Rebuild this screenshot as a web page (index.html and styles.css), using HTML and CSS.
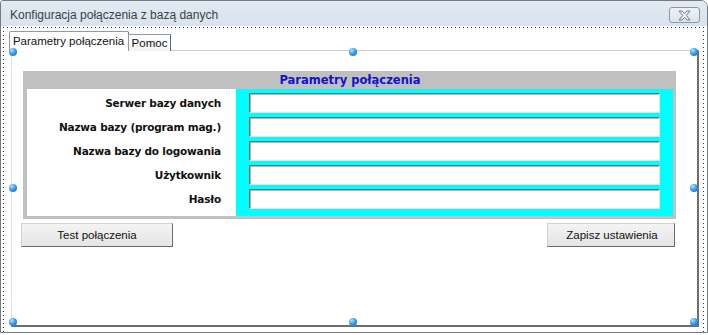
FILE: index.html
```html
<!DOCTYPE html>
<html lang="pl">
<head>
<meta charset="utf-8">
<title>Konfiguracja połączenia z bazą danych</title>
<link rel="stylesheet" href="styles.css">
</head>
<body>
<div class="window">
  <div class="titlebar">
    <span class="title">Konfiguracja połączenia z bazą danych</span>
    <div class="close">
      <svg width="15" height="11" viewBox="0 0 15 11">
        <path d="M2 1 L5 1 L7.5 3.6 L10 1 L13 1 L9.3 5.5 L13 10 L10 10 L7.5 7.4 L5 10 L2 10 L5.7 5.5 Z" fill="#f4f6f8" stroke="#6f7986" stroke-width="1"/>
      </svg>
    </div>
  </div>
  <div class="designer">
    <div class="tabs">
      <div class="tab active">Parametry połączenia</div>
      <div class="tab">Pomoc</div>
    </div>
    <div class="page">
      <span class="handle h-tl"></span>
      <span class="handle h-tc"></span>
      <span class="handle h-tr"></span>
      <span class="handle h-ml"></span>
      <span class="handle h-mr"></span>
      <span class="handle h-bl"></span>
      <span class="handle h-bc"></span>
      <span class="handle h-br"></span>
      <div class="panel">
        <div class="panel-head">Parametry połączenia</div>
        <div class="panel-body">
          <div class="labels">
            <div class="label">Serwer bazy danych</div>
            <div class="label">Nazwa bazy (program mag.)</div>
            <div class="label">Nazwa bazy do logowania</div>
            <div class="label">Użytkownik</div>
            <div class="label">Hasło</div>
          </div>
          <div class="fields">
            <div class="field"></div>
            <div class="field"></div>
            <div class="field"></div>
            <div class="field"></div>
            <div class="field"></div>
          </div>
        </div>
      </div>
      <div class="buttons">
        <div class="btn btn-test">Test połączenia</div>
        <div class="btn btn-save">Zapisz ustawienia</div>
      </div>
    </div>
  </div>
</div>
</body>
</html>
```
FILE: styles.css
```css
html, body {
  margin: 0;
  padding: 0;
  background: #ffffff;
}

.window {
  box-sizing: border-box;
  width: 708px;
  height: 333px;
  border: 1px solid #737b84;
  border-radius: 3px 7px 0 0;
  background: #ffffff;
  display: flex;
  flex-direction: column;
  overflow: hidden;
}

.titlebar {
  height: 25px;
  flex: none;
  display: flex;
  align-items: center;
  justify-content: space-between;
  padding: 0 7px 0 9px;
  background: linear-gradient(#e2e9f1, #d9e3ee);
}

.title {
  font-family: "Liberation Sans", Arial, sans-serif;
  font-size: 12px;
  color: #3a3f45;
  margin-top: 2px;
}

.close {
  box-sizing: border-box;
  width: 31px;
  height: 16px;
  margin-top: 3px;
  border: 1px solid #8c98a6;
  border-radius: 3px;
  background: linear-gradient(#eef2f6, #dde4ec);
  display: flex;
  align-items: center;
  justify-content: center;
}

.designer {
  flex: 1;
  margin: 1px 3px 0 2px;
  padding: 4px 0 0 8px;
  background-image:
    linear-gradient(to right, #333 1px, transparent 1px),
    linear-gradient(to bottom, #333 1px, transparent 1px),
    linear-gradient(to bottom, #333 1px, transparent 1px);
  background-size: 4px 1px, 1px 4px, 1px 4px;
  background-repeat: repeat-x, repeat-y, repeat-y;
  background-position: 0 0, 0 0, 100% 0;
}

.tabs {
  display: flex;
  align-items: flex-end;
  margin-left: -2px;
  height: 20px;
  position: relative;
  z-index: 2;
  margin-bottom: -1px;
}

.tab {
  box-sizing: border-box;
  font-family: "Liberation Sans", Arial, sans-serif;
  font-size: 11.5px;
  color: #111;
  border: 1px solid #8e9aa5;
  border-bottom: none;
  border-right-color: #5f6770;
  background: #ffffff;
  height: 17px;
  line-height: 15px;
  text-align: center;
}

.tab.active {
  width: 120px;
  height: 20px;
  line-height: 18px;
  padding-right: 1px;
  border-radius: 2px 2px 0 0;
}

.tab + .tab {
  width: 43px;
  margin-left: -1px;
  padding-top: 1px;
  background: linear-gradient(#ffffff, #f3f3f3);
}

.page {
  position: relative;
  box-sizing: border-box;
  width: 688px;
  height: 277px;
  border-top: 1px solid #c8cdd2;
  border-left: 1px solid #dde2e6;
  border-right: 2px solid #6e6e6e;
  border-bottom: 2px solid #6e6e6e;
  padding: 20px 0 0 11px;
  background: #ffffff;
}

.handle {
  position: absolute;
  width: 8px;
  height: 8px;
  border-radius: 50%;
  background: radial-gradient(circle at 35% 30%, #b5e0ff 0, #3b9cf0 45%, #1462c8 100%);
  z-index: 3;
}
.h-tl { left: -3px; top: -3px; }
.h-tc { left: 337px; top: -3px; }
.h-tr { left: 678px; top: -3px; }
.h-ml { left: -3px; top: 133px; }
.h-mr { left: 678px; top: 133px; }
.h-bl { left: -3px; top: 267px; }
.h-bc { left: 337px; top: 267px; }
.h-br { left: 678px; top: 267px; }

.panel {
  box-sizing: border-box;
  width: 653px;
  height: 148px;
  background: #c0c0c0;
  padding: 0 3px 3px 4px;
  display: flex;
  flex-direction: column;
}

.panel-head {
  height: 18px;
  flex: none;
  text-align: center;
  font-family: "DejaVu Sans", Verdana, sans-serif;
  font-weight: bold;
  font-size: 11.5px;
  line-height: 18px;
  color: #1212cc;
}

.panel-body {
  flex: 1;
  display: flex;
}

.labels {
  width: 209px;
  flex: none;
  background: #ffffff;
  padding: 4px 15px 0 0;
  box-sizing: border-box;
  display: flex;
  flex-direction: column;
  gap: 4px;
}

.label {
  height: 20px;
  line-height: 20px;
  text-align: right;
  font-family: "DejaVu Sans", Verdana, sans-serif;
  font-weight: bold;
  font-size: 10.5px;
  letter-spacing: -0.2px;
  color: #111;
}

.fields {
  flex: 1;
  background: #00ffff;
  padding: 4px 13px 7px 13px;
  display: flex;
  flex-direction: column;
  gap: 4px;
}

.field {
  box-sizing: border-box;
  height: 20px;
  background: #ffffff;
  border: 1px solid;
  border-color: #6f6f6f #e6e6e6 #e6e6e6 #6f6f6f;
  box-shadow: inset 1px 1px 0 #b9b9b9;
}

.buttons {
  display: flex;
  justify-content: space-between;
  margin: 4px 22px 0 -2px;
}

.btn {
  box-sizing: border-box;
  height: 24px;
  line-height: 22px;
  text-align: center;
  font-family: "Liberation Sans", Arial, sans-serif;
  font-size: 11.5px;
  color: #111;
  background: linear-gradient(#f4f4f4, #e4e4e4);
  border: 1px solid;
  border-color: #d2d2d2 #6c6c6c #6c6c6c #d2d2d2;
}

.btn-test { width: 152px; }
.btn-save { width: 128px; padding-left: 2px; }
```
